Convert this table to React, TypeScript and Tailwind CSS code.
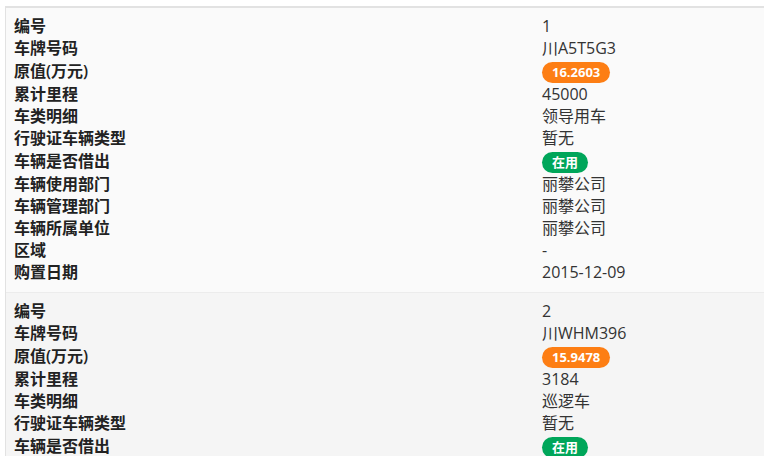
const vehicles = [
  {
    id: '1',
    plate: '川A5T5G3',
    price: '16.2603',
    mileage: '45000',
    kind: '领导用车',
    licenseType: '暂无',
    status: '在用',
    useDept: '丽攀公司',
    manageDept: '丽攀公司',
    owner: '丽攀公司',
    area: '-',
    date: '2015-12-09',
  },
  {
    id: '2',
    plate: '川WHM396',
    price: '15.9478',
    mileage: '3184',
    kind: '巡逻车',
    licenseType: '暂无',
    status: '在用',
    useDept: '丽攀公司',
    manageDept: '丽攀公司',
    owner: '丽攀公司',
    area: '-',
    date: '2016-03-21',
  },
];

type Vehicle = (typeof vehicles)[number];

const Row = ({ label, children, tall }: { label: string; children: React.ReactNode; tall?: boolean }) => (
  <div className={`flex items-center ${tall ? 'h-[24px]' : 'h-[22px]'}`}>
    <div className="w-[528px] shrink-0 font-semibold text-[#222]">{label}</div>
    <div className="text-[#333]">{children}</div>
  </div>
);

const Badge = ({ text, color }: { text: string; color: string }) => (
  <span
    className={`inline-flex items-center h-[21px] rounded-full px-[10px] text-[13px] font-bold text-white leading-none ${color}`}
  >
    {text}
  </span>
);

const VehicleCard = ({ v, bg }: { v: Vehicle; bg: string }) => (
  <div className={`${bg} pl-[8px] pt-[7px] pb-[9px]`}>
    <Row label="编号">{v.id}</Row>
    <Row label="车牌号码">{v.plate}</Row>
    <Row label="原值(万元)" tall>
      <Badge text={v.price} color="bg-[#fd7e14]" />
    </Row>
    <Row label="累计里程">{v.mileage}</Row>
    <Row label="车类明细">{v.kind}</Row>
    <Row label="行驶证车辆类型">{v.licenseType}</Row>
    <Row label="车辆是否借出" tall>
      <Badge text={v.status} color="bg-[#00a65a]" />
    </Row>
    <Row label="车辆使用部门">{v.useDept}</Row>
    <Row label="车辆管理部门">{v.manageDept}</Row>
    <Row label="车辆所属单位">{v.owner}</Row>
    <Row label="区域">{v.area}</Row>
    <Row label="购置日期">{v.date}</Row>
  </div>
);

export default function App() {
  return (
    <div
      className="h-screen w-screen overflow-hidden bg-white pl-[5px] pt-[6px] text-[16px]"
      style={{ fontFamily: '"Open Sans", "Noto Sans CJK SC", sans-serif' }}
    >
      <div className="border-t-2 border-l border-[#e2e2e2]">
        {vehicles.map((v, i) => (
          <div key={v.id} className={i > 0 ? 'border-t border-[#ececec]' : ''}>
            <VehicleCard v={v} bg={i % 2 === 0 ? 'bg-[#fafafa]' : 'bg-[#f5f5f5]'} />
          </div>
        ))}
      </div>
    </div>
  );
}
